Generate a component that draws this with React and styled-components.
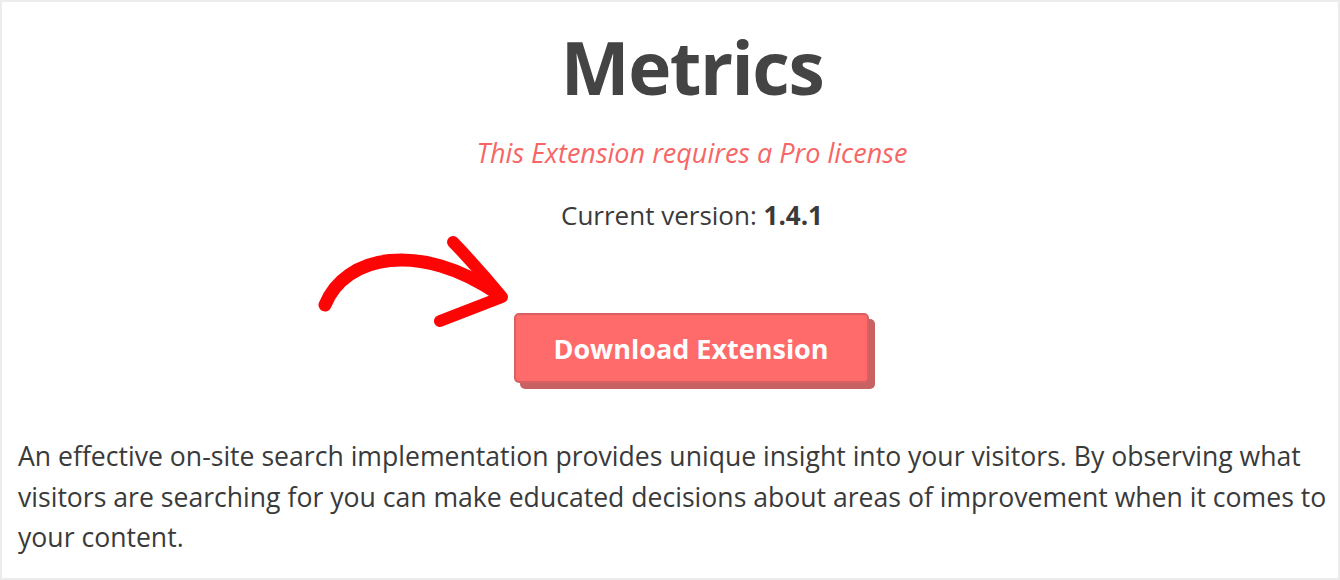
import styled, { createGlobalStyle } from "styled-components";

const GlobalStyle = createGlobalStyle`
  html, body {
    margin: 0;
    padding: 0;
    background: #fff;
  }
  body {
    font-family: "Open Sans", "Noto Sans", sans-serif;
    color: #3a3a3a;
  }
`;

const Frame = styled.div`
  box-sizing: border-box;
  width: 1340px;
  height: 580px;
  border: 2px solid #ececec;
  overflow: hidden;
`;

const Header = styled.div`
  display: flex;
  flex-direction: column;
  align-items: center;
  padding-left: 44px;
  text-align: center;
`;

const Title = styled.h1`
  margin: 20px 0 0;
  font-size: 73px;
  line-height: 90px;
  font-weight: 700;
  letter-spacing: -1.5px;
  color: #444;
`;

const License = styled.p`
  margin: 22.5px 0 0;
  font-size: 27px;
  line-height: 36px;
  font-style: italic;
  color: #f86565;
`;

const Version = styled.p`
  margin: 26.5px 0 0;
  font-size: 26px;
  line-height: 36px;
  color: #3a3a3a;

  b {
    font-weight: 700;
  }
`;

const ButtonWrap = styled.div`
  position: relative;
  margin-top: 80px;
  margin-left: -2px;
`;

const DownloadButton = styled.button`
  box-sizing: border-box;
  width: 355px;
  height: 70px;
  border: 2px solid #d96060;
  border-radius: 5px;
  background: #ff6b6b;
  box-shadow: 6px 6px 0 #c86262;
  color: #fff;
  font-family: "Open Sans", sans-serif;
  font-size: 27px;
  font-weight: 700;
  cursor: pointer;
`;

const Arrow = styled.svg`
  position: absolute;
  left: -204px;
  top: -83px;
  overflow: visible;
`;

const Description = styled.p`
  margin: 53px 0 0;
  padding: 0 0 0 16px;
  font-size: 26.6px;
  line-height: 40.5px;
  color: #3a3a3a;
  text-align: left;
`;

export default function App() {
  return (
    <>
      <GlobalStyle />
      <Frame>
        <Header>
          <Title>Metrics</Title>
          <License>This Extension requires a Pro license</License>
          <Version>
            Current version: <b>1.4.1</b>
          </Version>
          <ButtonWrap>
            <Arrow width="210" height="110" viewBox="310 230 210 110">
              <path
                d="M325 305 C345 255, 420 240, 498 294"
                fill="none"
                stroke="#fe0505"
                strokeWidth="13"
                strokeLinecap="round"
              />
              <path
                d="M453 242 Q478 268 502 297 L440 321"
                fill="none"
                stroke="#fe0505"
                strokeWidth="12"
                strokeLinecap="round"
                strokeLinejoin="round"
              />
            </Arrow>
            <DownloadButton>Download Extension</DownloadButton>
          </ButtonWrap>
        </Header>
        <Description>
          An effective on-site search implementation provides unique insight into your visitors. By observing what
          visitors are searching for you can make educated decisions about areas of improvement when it comes to
          your content.
        </Description>
      </Frame>
    </>
  );
}
